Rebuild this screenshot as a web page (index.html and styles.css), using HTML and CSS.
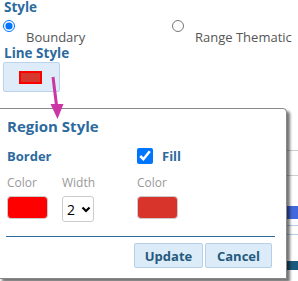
FILE: index.html
```html
<!DOCTYPE html>
<html lang="en">
<head>
  <meta charset="UTF-8" />
  <meta name="viewport" content="width=device-width, initial-scale=1.0" />
  <title>Region Style</title>
  <link rel="stylesheet" href="styles.css">
</head>
<body>
  <div class="page">
    <div class="title title-top">Style</div>
    <div class="radios">
      <label class="opt"><input type="radio" name="style" checked /><span class="opt-text">Boundary</span></label>
      <label class="opt"><input type="radio" name="style" /><span class="opt-text">Range Thematic</span></label>
    </div>
    <div class="title title-line">Line Style</div>
    <button class="line-btn"><span class="line-swatch"></span></button>

    <div class="under">
      <div class="row-line"></div>
      <div class="row-line second"></div>
      <div class="row-bar"></div>
      <div class="row-thin"></div>
      <div class="row-thin second-thin"></div>
      <div class="row-dark"></div>
    </div>
  </div>

  <div class="popup">
    <div class="popup-title">Region Style</div>
    <div class="grid head">
      <div class="sub">Border</div>
      <div></div>
      <label class="fill"><input type="checkbox" checked /><span class="sub">Fill</span></label>
    </div>
    <div class="grid labels">
      <span>Color</span>
      <span>Width</span>
      <span>Color</span>
    </div>
    <div class="grid controls">
      <span class="swatch border-color"></span>
      <span class="width-select">2
        <svg width="10" height="7" viewBox="0 0 10 7"><path d="M1.5 1.5 L5 5 L8.5 1.5" fill="none" stroke="#000" stroke-width="2.2"/></svg>
      </span>
      <span class="swatch fill-color"></span>
    </div>
    <div class="sep"></div>
    <div class="actions">
      <button class="btn btn-update">Update</button>
      <button class="btn btn-cancel">Cancel</button>
    </div>
  </div>

  <svg class="arrow" width="70" height="125" viewBox="0 0 70 125">
    <line x1="53" y1="77" x2="56.6" y2="106" stroke="#cb35a4" stroke-width="3" />
    <polygon points="50.5,104 63.5,104 57.5,119" fill="#cb35a4" />
  </svg>
</body>
</html>
```

FILE: styles.css
```css
body {
  margin: 0;
  font-family: "Open Sans", "Liberation Sans", sans-serif;
  background: #fff;
  position: relative;
  height: 281px;
  overflow: hidden;
}
.page {
  padding-left: 3px;
}
.title {
  font-size: 13.5px;
  font-weight: bold;
  line-height: 12px;
  color: #2d6a9e;
  padding-left: 1px;
}
.title-top {
  line-height: 14px;
  margin-bottom: -2px;
}
.radios {
  display: grid;
  grid-template-columns: 169px auto;
  margin-top: 8px;
}
.opt {
  display: flex;
  align-items: flex-start;
  gap: 11px;
}
.opt input {
  width: 12px;
  height: 12px;
  margin: 0;
}
.opt-text {
  font-size: 13px;
  line-height: 16px;
  padding-top: 9px;
  color: #555;
}
.title-line {
  margin-top: 2px;
}
.line-btn {
  display: flex;
  align-items: center;
  justify-content: center;
  width: 57px;
  height: 30px;
  margin-top: 3px;
  padding: 0;
  background: #deebf8;
  border: 1px solid #bcd3ea;
  border-radius: 2px;
}
.line-swatch {
  width: 19px;
  height: 9px;
  border: 2px solid #ff0000;
  background: #d6382e;
  margin-left: -2px;
}
.under {
  margin-left: -3px;
}
.row-line {
  height: 1px;
  background: #cdcdcd;
  margin-top: 58px;
}
.row-line.second {
  margin-top: 24px;
}
.row-bar {
  height: 13px;
  background: #4169dd;
  margin-top: 30px;
}
.row-thin {
  height: 1px;
  background: #b6cde4;
  margin-top: 6px;
}
.row-thin.second-thin {
  margin-top: 8px;
}
.row-dark {
  height: 9px;
  background: #1b5a7e;
  margin-top: 26px;
}
.popup {
  position: absolute;
  left: -1px;
  top: 108px;
  width: 268px;
  height: 169px;
  padding: 0 11px 0 7px;
  background: #fff;
  border: 1px solid #888;
  border-top-right-radius: 4px;
  box-shadow: 3px 3px 3px rgba(0,0,0,0.55);
}
.popup-title {
  font-size: 15px;
  font-weight: bold;
  line-height: 14px;
  color: #2d6a9e;
  margin-top: 10px;
}
.grid {
  display: grid;
  grid-template-columns: 55px 75px auto;
}
.head {
  margin-top: 14px;
  align-items: center;
  height: 17px;
}
.sub {
  font-size: 13px;
  font-weight: bold;
  color: #2d6a9e;
}
.fill {
  display: flex;
  align-items: center;
  gap: 9px;
}
.fill input {
  width: 16px;
  height: 16px;
  margin: 0;
}
.labels {
  margin-top: 12px;
  font-size: 12px;
  line-height: 14px;
  color: #999;
}
.controls {
  margin-top: 6px;
  align-items: start;
}
.swatch {
  display: block;
  width: 39px;
  height: 21px;
  border: 1px solid #ccc;
  border-radius: 4px;
}
.border-color {
  background: #ff0000;
}
.fill-color {
  background: #d9342b;
}
.width-select {
  display: flex;
  align-items: center;
  gap: 6px;
  box-sizing: border-box;
  width: 32px;
  height: 26px;
  padding-left: 4px;
  border: 1px solid #ccc;
  border-radius: 3px;
  font-size: 14px;
  color: #000;
}
.sep {
  height: 1px;
  background: #2b6a9b;
  margin: 14px 0 0 -1px;
}
.actions {
  display: flex;
  justify-content: flex-end;
  gap: 2px;
  margin-top: 6px;
  padding-right: 3px;
}
.btn {
  height: 25px;
  padding: 0;
  font-family: "Open Sans", "Liberation Sans", sans-serif;
  font-size: 13px;
  font-weight: bold;
  color: #255a7e;
  background: #dcebf8;
  border: 1px solid #b7d0e8;
  border-radius: 2px;
}
.btn-update {
  width: 69px;
}
.btn-cancel {
  width: 67px;
}
.arrow {
  position: absolute;
  left: 0;
  top: 0;
  z-index: 2;
}
```
